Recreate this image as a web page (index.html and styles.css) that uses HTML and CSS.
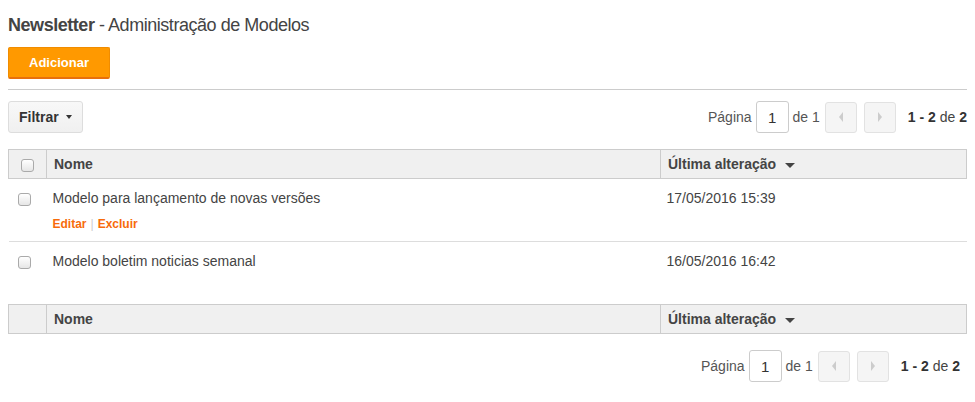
FILE: index.html
```html
<!DOCTYPE html>
<html lang="pt-BR">
<head>
    <meta charset="UTF-8" />
    <title>Newsletter - Administração de Modelos</title>
    <link rel="stylesheet" href="styles.css">
</head>
<body>
    <h1 class="title"><strong>Newsletter</strong> - Administração de Modelos</h1>
    <div class="actions">
        <button class="add-btn">Adicionar</button>
    </div>

    <div class="toolbar">
        <button class="filter-btn">Filtrar <span class="caret"></span></button>
        <div class="pager">
            <span>Página</span>
            <input class="page-input" type="text" value="1">
            <span>de 1</span>
            <button class="page-btn prev"><span class="arrow-left"></span></button>
            <button class="page-btn next"><span class="arrow-right"></span></button>
            <span class="count"><b>1 - 2</b> de <b>2</b></span>
        </div>
    </div>

    <table class="grid">
        <thead>
            <tr>
                <th class="col-check"><span class="check"></span></th>
                <th class="col-name">Nome</th>
                <th class="col-date">Última alteração <span class="sort"></span></th>
            </tr>
        </thead>
        <tbody>
            <tr>
                <td class="col-check"><span class="check"></span></td>
                <td class="col-name">
                    Modelo para lançamento de novas versões
                    <div class="row-links"><a href="#">Editar</a><span class="sep">|</span><a href="#">Excluir</a></div>
                </td>
                <td class="col-date">17/05/2016 15:39</td>
            </tr>
            <tr>
                <td class="col-check"><span class="check"></span></td>
                <td class="col-name">Modelo boletim noticias semanal</td>
                <td class="col-date">16/05/2016 16:42</td>
            </tr>
        </tbody>
        <tfoot>
            <tr>
                <th class="col-check"></th>
                <th class="col-name">Nome</th>
                <th class="col-date">Última alteração <span class="sort"></span></th>
            </tr>
        </tfoot>
    </table>

    <div class="toolbar bottom">
        <div class="pager">
            <span>Página</span>
            <input class="page-input" type="text" value="1">
            <span>de 1</span>
            <button class="page-btn prev"><span class="arrow-left"></span></button>
            <button class="page-btn next"><span class="arrow-right"></span></button>
            <span class="count"><b>1 - 2</b> de <b>2</b></span>
        </div>
    </div>
</body>
</html>
```

FILE: styles.css
```css
body {
    margin: 0;
    padding: 0 8px;
    font-family: 'Liberation Sans', Arial, sans-serif;
    color: #444;
    background: #fff;
}

.title {
    margin: 0;
    padding-top: 14px;
    font-size: 18px;
    font-weight: normal;
    line-height: 22px;
    letter-spacing: -0.46px;
}

.title strong {
    font-weight: bold;
}

.actions {
    margin-top: 11px;
    padding-bottom: 10px;
    border-bottom: 1px solid #ccc;
}

.add-btn {
    display: block;
    width: 102px;
    height: 32px;
    padding: 0;
    background-color: #ff9900;
    border: 1px solid #f08c00;
    border-bottom: 2px solid #e8700c;
    border-radius: 2px;
    color: #fff;
    font-family: inherit;
    font-size: 13px;
    font-weight: bold;
}

.toolbar {
    display: flex;
    align-items: center;
    justify-content: space-between;
    margin-top: 11px;
}

.toolbar.bottom {
    justify-content: flex-end;
    margin-top: 16px;
    padding-right: 7px;
}

.filter-btn {
    height: 32px;
    padding: 0 10px;
    background: linear-gradient(#f8f8f8, #f0f0f0);
    border: 1px solid #ddd;
    border-radius: 3px;
    color: #333;
    font-family: inherit;
    font-size: 14px;
    font-weight: bold;
    display: flex;
    align-items: center;
    gap: 7px;
}

.caret {
    width: 0;
    height: 0;
    border-left: 3px solid transparent;
    border-right: 3px solid transparent;
    border-top: 4px solid #333;
}

.pager {
    display: flex;
    align-items: center;
    font-size: 14px;
    color: #555;
}

.page-input {
    width: 33px;
    height: 32px;
    box-sizing: border-box;
    margin: 0 4px;
    border: 1px solid #ccc;
    border-radius: 3px;
    text-align: center;
    font-family: inherit;
    font-size: 15px;
    color: #333;
}

.page-btn {
    width: 32px;
    height: 31px;
    padding: 0;
    background: #f5f5f5;
    border: 1px solid #e2e2e2;
    border-radius: 3px;
    display: grid;
    place-items: center;
}

.page-btn.prev {
    margin-left: 5px;
}

.page-btn.next {
    margin-left: 7px;
}

.arrow-left {
    width: 0;
    height: 0;
    border-top: 5px solid transparent;
    border-bottom: 5px solid transparent;
    border-right: 4px solid #ccc;
}

.arrow-right {
    width: 0;
    height: 0;
    border-top: 5px solid transparent;
    border-bottom: 5px solid transparent;
    border-left: 4px solid #ccc;
}

.count {
    margin-left: 12px;
    color: #444;
}

.count b {
    color: #333;
}

.grid {
    width: 100%;
    margin-top: 16px;
    border-collapse: collapse;
    font-size: 14px;
}

.grid th {
    height: 28px;
    padding: 0 7px;
    background-color: #f0f0f0;
    border: 1px solid #ccc;
    text-align: left;
    font-weight: bold;
    color: #444;
}

.grid td {
    padding: 11px 6px 8px;
    border-bottom: 1px solid #ddd;
    vertical-align: top;
    line-height: 17px;
}

.grid tbody tr:last-child td {
    border-bottom: 0;
    padding-bottom: 34px;
}

.grid tfoot th {
    border-top: 1px solid #ccc;
}

.col-check {
    width: 23px;
    text-align: center !important;
}

.grid td.col-check {
    padding-left: 9px;
    padding-right: 0;
    text-align: left !important;
}

.col-date {
    width: 291px;
}

.grid td.col-date {
    padding-left: 6px;
}

.check {
    display: inline-block;
    width: 11px;
    height: 11px;
    border: 1px solid #aaa;
    border-radius: 3px;
    background: linear-gradient(#fff, #e6e6e6);
    vertical-align: middle;
}

.grid td .check {
    margin-top: 1px;
}

.sort {
    display: inline-block;
    margin-left: 5px;
    width: 0;
    height: 0;
    border-left: 5px solid transparent;
    border-right: 5px solid transparent;
    border-top: 5px solid #444;
    vertical-align: middle;
}

.row-links {
    margin-top: 9px;
    font-size: 12px;
    font-weight: bold;
}

.row-links a {
    color: #f76b0b;
    text-decoration: none;
}

.sep {
    margin: 0 4px;
    color: #ccc;
    font-weight: normal;
}
```
